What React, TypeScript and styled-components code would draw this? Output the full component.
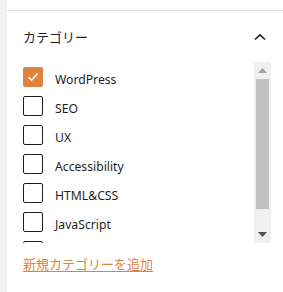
import React from 'react';
import styled, { createGlobalStyle } from 'styled-components';

const GlobalStyle = createGlobalStyle`
  html, body {
    margin: 0;
    padding: 0;
    background: #fff;
  }
  body {
    font-family: "Noto Sans", "Noto Sans CJK JP", sans-serif;
    color: #1e1e1e;
  }
`;

const Page = styled.div`
  display: flex;
  width: 283px;
  height: 292px;
  overflow: hidden;
`;

const Gutter = styled.div`
  flex: 0 0 7px;
  background: #f0f0f0;
`;

const Panel = styled.div`
  flex: 1 1 auto;
  display: flex;
  flex-direction: column;
  background: #fff;
`;

const TopStrip = styled.div`
  flex: 0 0 10px;
  border-bottom: 1px solid #e0e0e0;
`;

const Header = styled.div`
  flex: 0 0 51px;
  display: flex;
  align-items: center;
  justify-content: space-between;
  padding: 0 17px 0 16px;
`;

const Title = styled.h2`
  margin: 0;
  font-family: "Noto Sans CJK JP", sans-serif;
  font-size: 13px;
  font-weight: 400;
  color: #1e1e1e;
`;

const ListBox = styled.div`
  display: flex;
  height: 181px;
  margin: 0 12px 0 16px;
`;

const List = styled.ul`
  flex: 1 1 auto;
  margin: 0;
  padding: 5px 0 0;
  list-style: none;
  overflow: hidden;
`;

const Row = styled.li`
  display: flex;
  align-items: center;
  gap: 12px;
  height: 20px;
  margin-bottom: 9px;
`;

const Label = styled.span`
  padding-top: 4px;
  font-size: 12.2px;
  color: #1e1e1e;
`;

const Box = styled.span<{ checked?: boolean }>`
  box-sizing: border-box;
  flex: 0 0 20px;
  height: 20px;
  border-radius: 2px;
  border: 1.5px solid ${p => (p.checked ? '#e0843d' : '#1e1e1e')};
  background: ${p => (p.checked ? '#e0843d' : '#fff')};
  display: flex;
  align-items: center;
  justify-content: center;
`;

const Scrollbar = styled.div`
  flex: 0 0 17px;
  display: flex;
  flex-direction: column;
  background: #f0f0f0;
`;

const ScrollButton = styled.div`
  flex: 0 0 17px;
  display: flex;
  align-items: center;
  justify-content: center;
`;

const Track = styled.div`
  flex: 1 1 auto;
  padding: 0 2px;
`;

const Thumb = styled.div`
  height: 130px;
  background: #c1c1c1;
`;

const AddLink = styled.a`
  margin: 12px 0 0 16px;
  align-self: flex-start;
  font-family: "Noto Sans CJK JP", sans-serif;
  font-size: 13px;
  line-height: 18px;
  color: #e0843d;
  text-decoration: underline;
  text-underline-offset: 2px;
`;

const categories = [
  { name: 'WordPress', checked: true },
  { name: 'SEO' },
  { name: 'UX' },
  { name: 'Accessibility' },
  { name: 'HTML&CSS' },
  { name: 'JavaScript' },
];

const Check = () => (
  <svg width="14" height="14" viewBox="0 0 14 14">
    <path d="M2.5 7.2 L5.6 10.2 L11.5 3.4" fill="none" stroke="#fff" strokeWidth="1.6" />
  </svg>
);

const ChevronUp = () => (
  <svg width="12" height="8" viewBox="0 0 12 8">
    <path d="M1 6.5 L6 1.8 L11 6.5" fill="none" stroke="#1e1e1e" strokeWidth="1.6" />
  </svg>
);

const Arrow = ({ up, color }: { up?: boolean; color: string }) => (
  <svg width="9" height="5" viewBox="0 0 9 5">
    <path d={up ? 'M0 5 L4.5 0 L9 5 Z' : 'M0 0 L9 0 L4.5 5 Z'} fill={color} />
  </svg>
);

export default function App() {
  return (
    <Page>
      <GlobalStyle />
      <Gutter />
      <Panel>
        <TopStrip />
        <Header>
          <Title>カテゴリー</Title>
          <ChevronUp />
        </Header>
        <ListBox>
          <List>
            {categories.map(c => (
              <Row key={c.name}>
                <Box checked={c.checked}>{c.checked && <Check />}</Box>
                <Label>{c.name}</Label>
              </Row>
            ))}
            {/* next item, scrolled out of view */}
            <Row>
              <Box />
            </Row>
          </List>
          <Scrollbar>
            <ScrollButton>
              <Arrow up color="#a3a3a3" />
            </ScrollButton>
            <Track>
              <Thumb />
            </Track>
            <ScrollButton>
              <Arrow color="#505050" />
            </ScrollButton>
          </Scrollbar>
        </ListBox>
        <AddLink href="#">新規カテゴリーを追加</AddLink>
      </Panel>
    </Page>
  );
}
